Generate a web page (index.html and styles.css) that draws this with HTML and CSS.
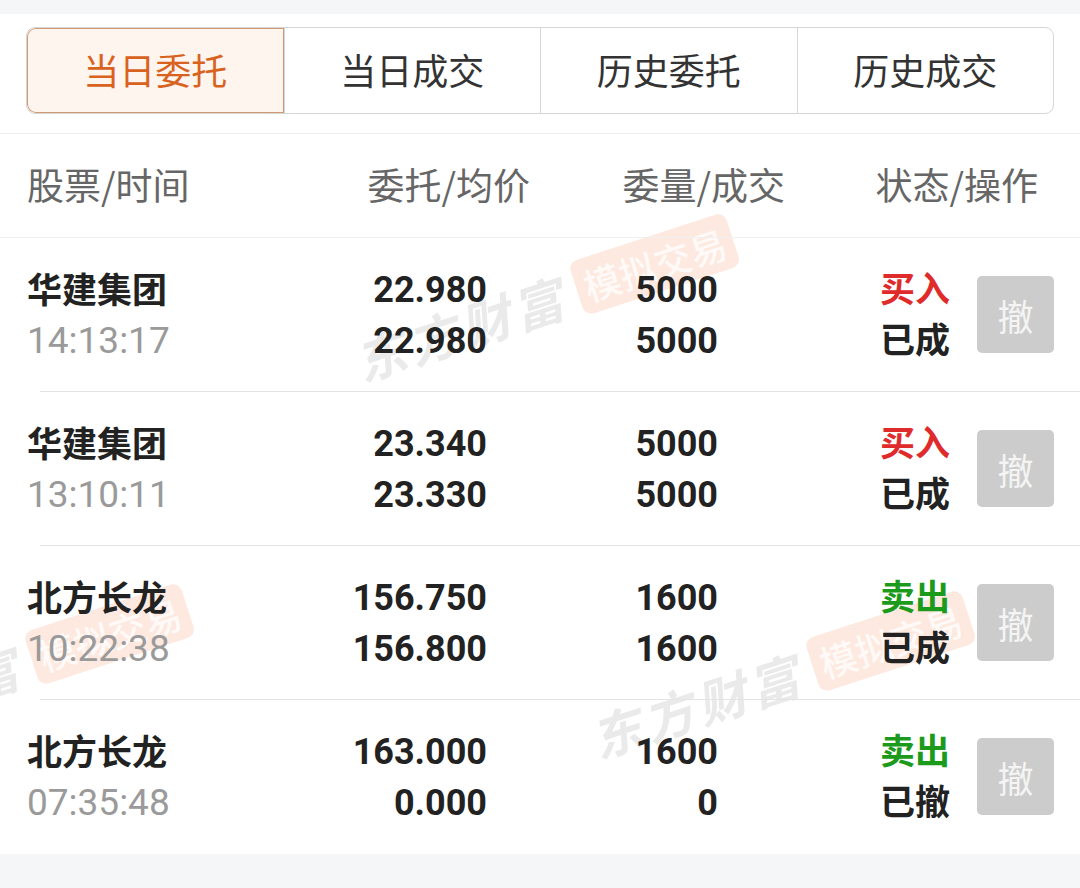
FILE: index.html
```html
<!DOCTYPE html>
<html lang="zh-CN">
<head>
<meta charset="utf-8">
<title>当日委托</title>
<link rel="stylesheet" href="styles.css">
</head>
<body>
<div class="screen">
  <div class="top-gap"></div>
  <main class="sheet">
    <div class="watermarks" aria-hidden="true">
      <div class="wm wm1"><span class="wm-brand">东方财富</span><span class="wm-tag">模拟交易</span></div>
      <div class="wm wm2"><span class="wm-brand">东方财富</span><span class="wm-tag">模拟交易</span></div>
      <div class="wm wm3"><span class="wm-brand">东方财富</span><span class="wm-tag">模拟交易</span></div>
    </div>

    <section class="tabs-bar">
      <nav class="tabs">
        <div class="tab active">当日委托</div>
        <div class="tab">当日成交</div>
        <div class="tab">历史委托</div>
        <div class="tab">历史成交</div>
      </nav>
    </section>

    <div class="thead">
      <div class="th th-left">股票/时间</div>
      <div class="th">委托/均价</div>
      <div class="th">委量/成交</div>
      <div class="th">状态/操作</div>
    </div>

    <div class="list">
      <div class="row">
        <div class="cell name"><div class="stock">华建集团</div><div class="time">14:13:17</div></div>
        <div class="cell num"><div>22.980</div><div>22.980</div></div>
        <div class="cell num"><div>5000</div><div>5000</div></div>
        <div class="cell status"><div class="buy">买入</div><div>已成</div></div>
        <button class="cancel">撤</button>
      </div>
      <div class="row">
        <div class="cell name"><div class="stock">华建集团</div><div class="time">13:10:11</div></div>
        <div class="cell num"><div>23.340</div><div>23.330</div></div>
        <div class="cell num"><div>5000</div><div>5000</div></div>
        <div class="cell status"><div class="buy">买入</div><div>已成</div></div>
        <button class="cancel">撤</button>
      </div>
      <div class="row">
        <div class="cell name"><div class="stock">北方长龙</div><div class="time">10:22:38</div></div>
        <div class="cell num"><div>156.750</div><div>156.800</div></div>
        <div class="cell num"><div>1600</div><div>1600</div></div>
        <div class="cell status"><div class="sell">卖出</div><div>已成</div></div>
        <button class="cancel">撤</button>
      </div>
      <div class="row last">
        <div class="cell name"><div class="stock">北方长龙</div><div class="time">07:35:48</div></div>
        <div class="cell num"><div>163.000</div><div>0.000</div></div>
        <div class="cell num"><div>1600</div><div>0</div></div>
        <div class="cell status"><div class="sell">卖出</div><div>已撤</div></div>
        <button class="cancel">撤</button>
      </div>
    </div>
  </main>
</div>
</body>
</html>
```

FILE: styles.css
```css
* { box-sizing: border-box; }

html, body {
  margin: 0;
  padding: 0;
  background: #f5f6f8;
}

body {
  font-family: "Noto Sans CJK SC", "Noto Sans", sans-serif;
  color: #222;
}

.screen {
  width: 1080px;
  min-height: 888px;
  background: #f5f6f8;
}

.top-gap {
  height: 14px;
}

.sheet {
  position: relative;
  z-index: 0;
  overflow: hidden;
  background: #fff;
}

/* watermark overlay (free canvas) */
.watermarks {
  position: absolute;
  inset: 0;
  z-index: -1;
  pointer-events: none;
}

.wm {
  position: absolute;
  display: flex;
  align-items: center;
  gap: 12px;
  height: 56px;
  transform: rotate(-18deg);
  transform-origin: 0 50%;
  white-space: nowrap;
}

.wm1 { left: 356px; top: 319px; }
.wm2 { left: -189px; top: 689px; }
.wm3 { left: 592px; top: 696px; }

.wm-brand {
  font-size: 50px;
  font-weight: 700;
  letter-spacing: 5px;
  line-height: 56px;
  color: #eaeaea;
  font-style: italic;
}

.wm-tag {
  display: flex;
  align-items: center;
  height: 56px;
  padding: 0 8px;
  border-radius: 9px;
  background: #fde9df;
  color: #fffaf7;
  font-size: 37px;
  font-weight: 500;
  line-height: 56px;
}

/* tabs */
.tabs-bar {
  padding: 13px 26px 19px 26px;
  border-bottom: 1px solid #eeeeee;
}

.tabs {
  display: grid;
  grid-template-columns: repeat(4, 1fr);
  height: 87px;
  border: 1px solid #d6d6d6;
  border-radius: 9px;
  overflow: hidden;
}

.tab {
  display: flex;
  align-items: center;
  justify-content: center;
  padding-bottom: 4px;
  font-size: 36px;
  line-height: 1;
  color: #333;
  border-left: 1px solid #d6d6d6;
}

.tab:first-child {
  border-left: none;
}

.tab.active {
  color: #d9621f;
  background: #fff5ef;
  box-shadow: inset 0 0 0 1px #cf9a74;
  border-radius: 9px 0 0 9px;
}

/* table header */
.thead {
  display: grid;
  grid-template-columns: 263px 240px 255px 253px;
  align-items: center;
  height: 104px;
  padding: 0 42px 2px 27px;
  border-bottom: 1px solid #f0f0f0;
}

.th {
  font-size: 37px;
  line-height: 1;
  color: #666;
  text-align: right;
}

.th-left {
  text-align: left;
}

/* rows */
.row {
  display: grid;
  grid-template-columns: 260px 200px 231px 232px 104px;
  align-items: center;
  height: 154px;
  padding: 0 26px 1px 27px;
  background-image: linear-gradient(#e3e3e3, #e3e3e3);
  background-repeat: no-repeat;
  background-size: calc(100% - 40px) 1px;
  background-position: right bottom;
}

.row.last {
  background-image: none;
}

.cell > div {
  height: 51px;
  line-height: 51px;
  white-space: nowrap;
}

.name .stock {
  font-size: 35px;
  font-weight: 700;
  line-height: 47px;
  color: #222;
}

.name .time {
  font-family: Roboto, "Noto Sans", sans-serif;
  font-size: 37px;
  font-weight: 400;
  color: #9a9a9a;
}

.num {
  text-align: right;
  font-family: Roboto, "Noto Sans", sans-serif;
  font-size: 36px;
  font-weight: 700;
  color: #222;
}

.num > div {
  line-height: 53px;
}

.status {
  text-align: right;
  font-size: 35px;
  font-weight: 700;
  color: #222;
}

.status > div {
  line-height: 46px;
}

.status .buy { color: #e02b2b; }
.status .sell { color: #1c9a1c; }

.cancel {
  justify-self: end;
  width: 77px;
  height: 77px;
  padding: 0;
  border: none;
  border-radius: 5px;
  background: #cccccc;
  color: #f4f4f4;
  font-family: "Noto Sans CJK SC", sans-serif;
  font-size: 36px;
  line-height: 74px;
  text-align: center;
}
```
